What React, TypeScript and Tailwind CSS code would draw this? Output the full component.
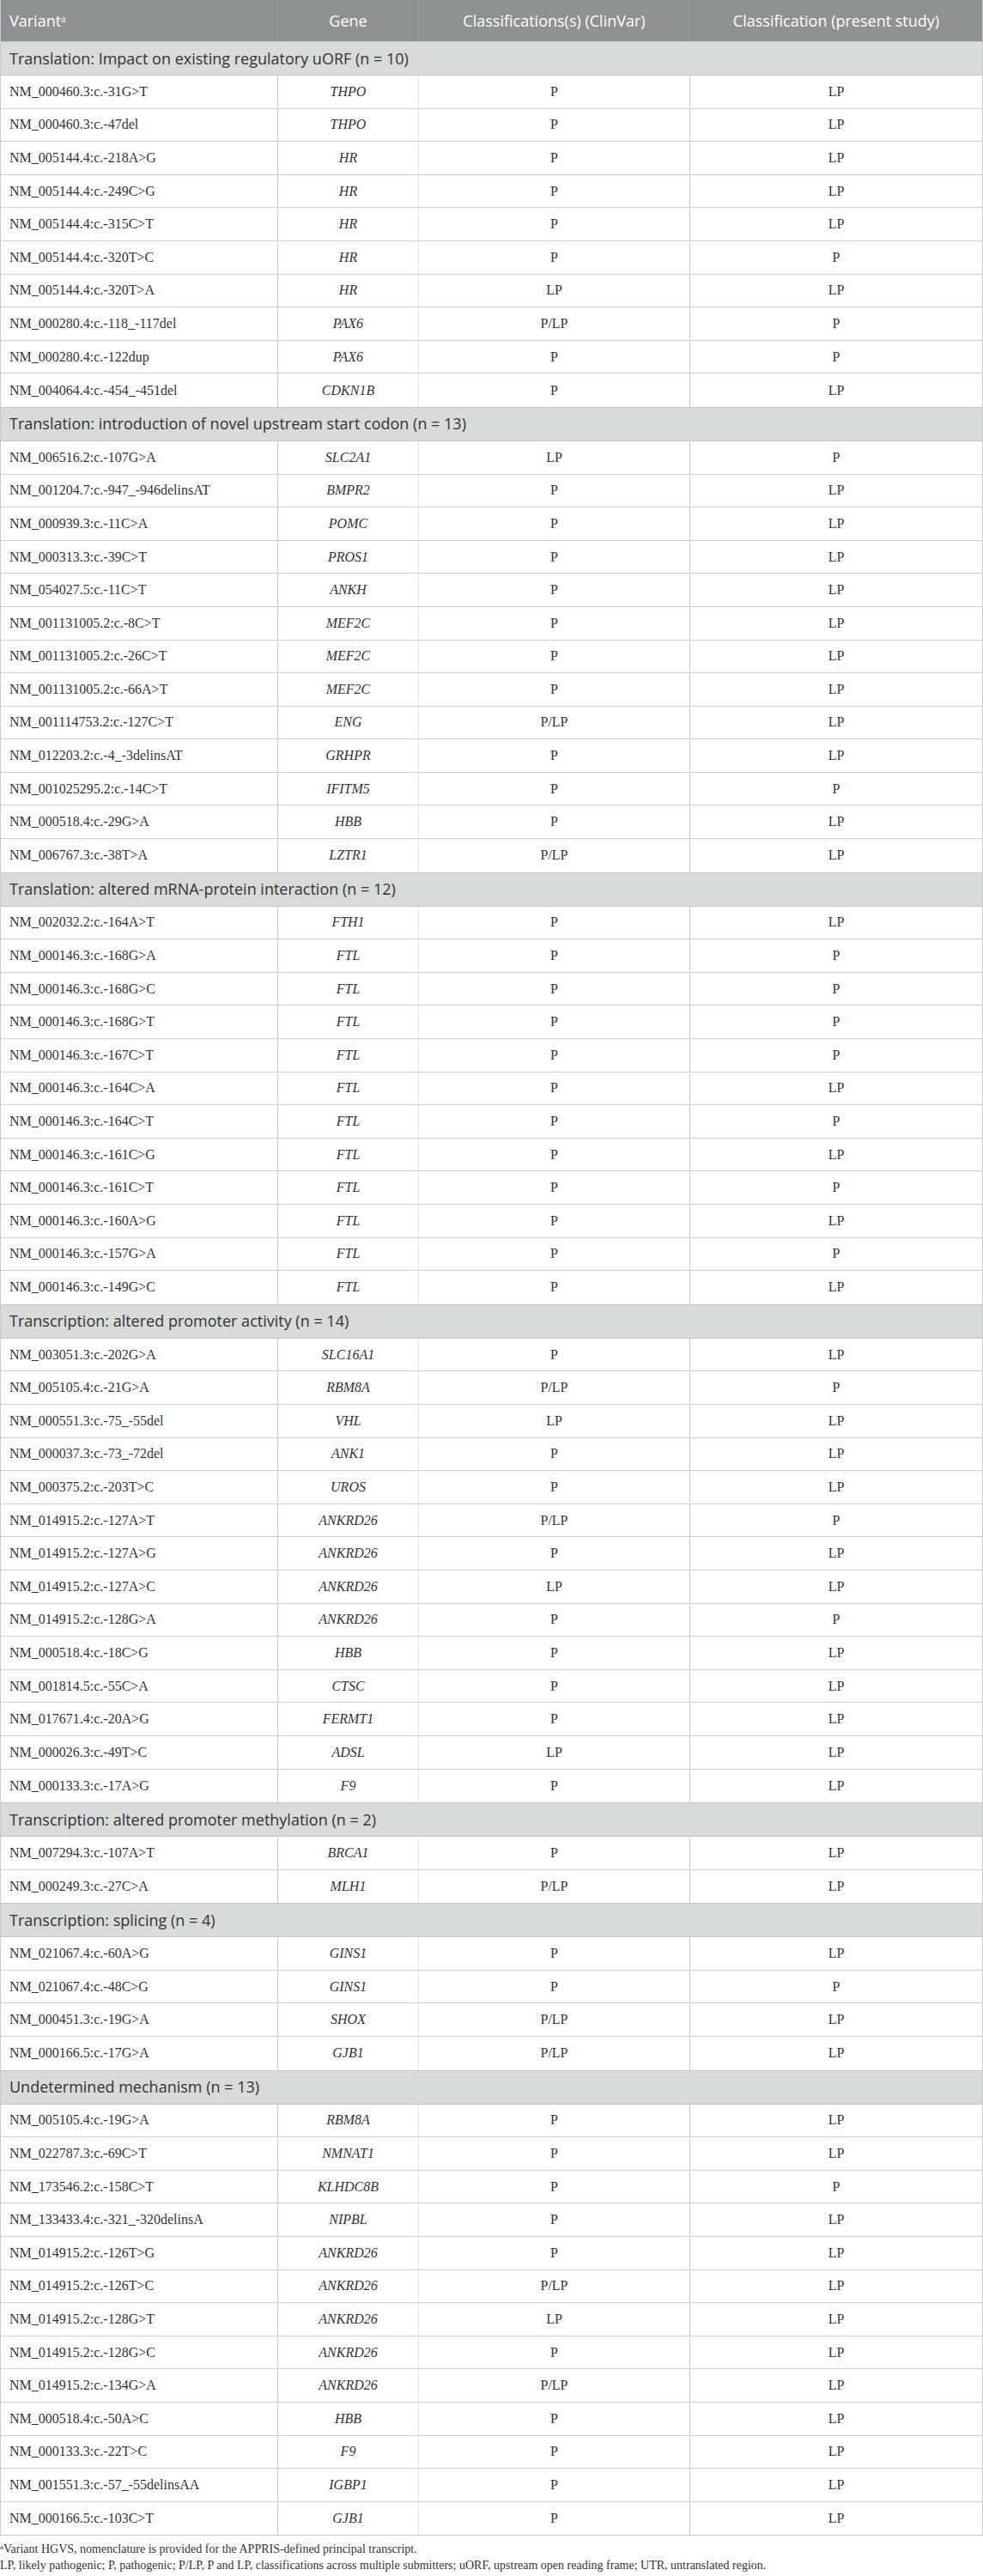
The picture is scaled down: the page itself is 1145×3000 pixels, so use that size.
import React from "react";

type Row = [string, string, string, string];
type Section = { title: string; rows: Row[] };

const sections: Section[] = [
  {
    title: "Translation: Impact on existing regulatory uORF (n = 10)",
    rows: [
      ["NM_000460.3:c.-31G>T", "THPO", "P", "LP"],
      ["NM_000460.3:c.-47del", "THPO", "P", "LP"],
      ["NM_005144.4:c.-218A>G", "HR", "P", "LP"],
      ["NM_005144.4:c.-249C>G", "HR", "P", "LP"],
      ["NM_005144.4:c.-315C>T", "HR", "P", "LP"],
      ["NM_005144.4:c.-320T>C", "HR", "P", "P"],
      ["NM_005144.4:c.-320T>A", "HR", "LP", "LP"],
      ["NM_000280.4:c.-118_-117del", "PAX6", "P/LP", "P"],
      ["NM_000280.4:c.-122dup", "PAX6", "P", "P"],
      ["NM_004064.4:c.-454_-451del", "CDKN1B", "P", "LP"],
    ],
  },
  {
    title: "Translation: introduction of novel upstream start codon (n = 13)",
    rows: [
      ["NM_006516.2:c.-107G>A", "SLC2A1", "LP", "P"],
      ["NM_001204.7:c.-947_-946delinsAT", "BMPR2", "P", "LP"],
      ["NM_000939.3:c.-11C>A", "POMC", "P", "LP"],
      ["NM_000313.3:c.-39C>T", "PROS1", "P", "LP"],
      ["NM_054027.5:c.-11C>T", "ANKH", "P", "LP"],
      ["NM_001131005.2:c.-8C>T", "MEF2C", "P", "LP"],
      ["NM_001131005.2:c.-26C>T", "MEF2C", "P", "LP"],
      ["NM_001131005.2:c.-66A>T", "MEF2C", "P", "LP"],
      ["NM_001114753.2:c.-127C>T", "ENG", "P/LP", "LP"],
      ["NM_012203.2:c.-4_-3delinsAT", "GRHPR", "P", "LP"],
      ["NM_001025295.2:c.-14C>T", "IFITM5", "P", "P"],
      ["NM_000518.4:c.-29G>A", "HBB", "P", "LP"],
      ["NM_006767.3:c.-38T>A", "LZTR1", "P/LP", "LP"],
    ],
  },
  {
    title: "Translation: altered mRNA-protein interaction (n = 12)",
    rows: [
      ["NM_002032.2:c.-164A>T", "FTH1", "P", "LP"],
      ["NM_000146.3:c.-168G>A", "FTL", "P", "P"],
      ["NM_000146.3:c.-168G>C", "FTL", "P", "P"],
      ["NM_000146.3:c.-168G>T", "FTL", "P", "P"],
      ["NM_000146.3:c.-167C>T", "FTL", "P", "P"],
      ["NM_000146.3:c.-164C>A", "FTL", "P", "LP"],
      ["NM_000146.3:c.-164C>T", "FTL", "P", "P"],
      ["NM_000146.3:c.-161C>G", "FTL", "P", "LP"],
      ["NM_000146.3:c.-161C>T", "FTL", "P", "P"],
      ["NM_000146.3:c.-160A>G", "FTL", "P", "LP"],
      ["NM_000146.3:c.-157G>A", "FTL", "P", "P"],
      ["NM_000146.3:c.-149G>C", "FTL", "P", "LP"],
    ],
  },
  {
    title: "Transcription: altered promoter activity (n = 14)",
    rows: [
      ["NM_003051.3:c.-202G>A", "SLC16A1", "P", "LP"],
      ["NM_005105.4:c.-21G>A", "RBM8A", "P/LP", "P"],
      ["NM_000551.3:c.-75_-55del", "VHL", "LP", "LP"],
      ["NM_000037.3:c.-73_-72del", "ANK1", "P", "LP"],
      ["NM_000375.2:c.-203T>C", "UROS", "P", "LP"],
      ["NM_014915.2:c.-127A>T", "ANKRD26", "P/LP", "P"],
      ["NM_014915.2:c.-127A>G", "ANKRD26", "P", "LP"],
      ["NM_014915.2:c.-127A>C", "ANKRD26", "LP", "LP"],
      ["NM_014915.2:c.-128G>A", "ANKRD26", "P", "P"],
      ["NM_000518.4:c.-18C>G", "HBB", "P", "LP"],
      ["NM_001814.5:c.-55C>A", "CTSC", "P", "LP"],
      ["NM_017671.4:c.-20A>G", "FERMT1", "P", "LP"],
      ["NM_000026.3:c.-49T>C", "ADSL", "LP", "LP"],
      ["NM_000133.3:c.-17A>G", "F9", "P", "LP"],
    ],
  },
  {
    title: "Transcription: altered promoter methylation (n = 2)",
    rows: [
      ["NM_007294.3:c.-107A>T", "BRCA1", "P", "LP"],
      ["NM_000249.3:c.-27C>A", "MLH1", "P/LP", "LP"],
    ],
  },
  {
    title: "Transcription: splicing (n = 4)",
    rows: [
      ["NM_021067.4:c.-60A>G", "GINS1", "P", "LP"],
      ["NM_021067.4:c.-48C>G", "GINS1", "P", "P"],
      ["NM_000451.3:c.-19G>A", "SHOX", "P/LP", "LP"],
      ["NM_000166.5:c.-17G>A", "GJB1", "P/LP", "LP"],
    ],
  },
  {
    title: "Undetermined mechanism (n = 13)",
    rows: [
      ["NM_005105.4:c.-19G>A", "RBM8A", "P", "LP"],
      ["NM_022787.3:c.-69C>T", "NMNAT1", "P", "LP"],
      ["NM_173546.2:c.-158C>T", "KLHDC8B", "P", "P"],
      ["NM_133433.4:c.-321_-320delinsA", "NIPBL", "P", "LP"],
      ["NM_014915.2:c.-126T>G", "ANKRD26", "P", "LP"],
      ["NM_014915.2:c.-126T>C", "ANKRD26", "P/LP", "LP"],
      ["NM_014915.2:c.-128G>T", "ANKRD26", "LP", "LP"],
      ["NM_014915.2:c.-128G>C", "ANKRD26", "P", "LP"],
      ["NM_014915.2:c.-134G>A", "ANKRD26", "P/LP", "LP"],
      ["NM_000518.4:c.-50A>C", "HBB", "P", "LP"],
      ["NM_000133.3:c.-22T>C", "F9", "P", "LP"],
      ["NM_001551.3:c.-57_-55delinsAA", "IGBP1", "P", "LP"],
      ["NM_000166.5:c.-103C>T", "GJB1", "P", "LP"],
    ],
  },
];

const sans = "font-['Open_Sans','Noto_Sans',sans-serif]";
const serif = "font-['Liberation_Serif','Times_New_Roman',serif]";
const grid = "grid grid-cols-[323px_164px_316px_1fr]";

export default function App() {
  return (
    <div className="w-[1145px] bg-white">
      <div className="border-l border-r border-[#c9c9c9]">
        <div className={`${grid} h-[48px] bg-[#8f9090] text-white text-[18px] ${sans}`}>
          <div className="flex items-center pl-[10px] border-r border-[#9d9e9e]">
            Variant<sup className="text-[10px] relative -top-[2px]">a</sup>
          </div>
          <div className="flex items-center justify-center border-r border-[#9d9e9e]">Gene</div>
          <div className="flex items-center justify-center border-r border-[#9d9e9e]">
            Classifications(s) (ClinVar)
          </div>
          <div className="flex items-center justify-center">Classification (present study)</div>
        </div>
        {sections.map((s) => (
          <div key={s.title}>
            <div
              className={`h-[40px] flex items-center pl-[10px] bg-[#d9dada] border-t border-b border-[#c4c4c4] text-[18px] text-[#333] ${sans}`}
            >
              {s.title}
            </div>
            {s.rows.map((r, i) => (
              <div
                key={r[0] + i}
                className={`${grid} h-[38.6px] text-[16px] text-[#333] ${serif} ${
                  i === s.rows.length - 1 ? "" : "border-b border-[#d0d0d0]"
                }`}
              >
                <div className="flex items-center pl-[10px] border-r border-[#c9c9c9]">{r[0]}</div>
                <div className="flex items-center justify-center italic border-r border-[#e6e6e6]">
                  {r[1]}
                </div>
                <div className="flex items-center justify-center border-r border-[#c9c9c9]">{r[2]}</div>
                <div className="flex items-center justify-center">{r[3]}</div>
              </div>
            ))}
          </div>
        ))}
        <div className="border-b border-[#c9c9c9]" />
      </div>
      <div className={`pt-[6px] text-[14px] leading-[19px] text-[#333] ${serif}`}>
        <div>
          <sup className="text-[9px]">a</sup>Variant HGVS, nomenclature is provided for the APPRIS-defined principal
          transcript.
        </div>
        <div>
          LP, likely pathogenic; P, pathogenic; P/LP, P and LP, classifications across multiple submitters; uORF,
          upstream open reading frame; UTR, untranslated region.
        </div>
      </div>
    </div>
  );
}
